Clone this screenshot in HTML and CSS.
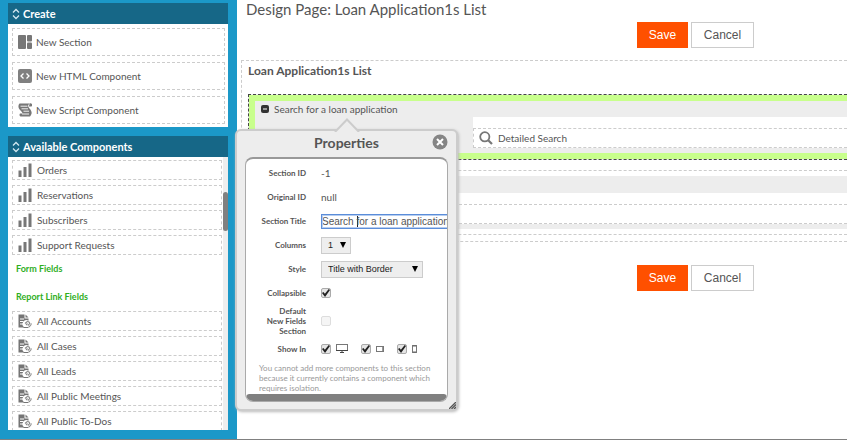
FILE: index.html
```html
<!DOCTYPE html>
<html lang="en">
<head>
<meta charset="utf-8">
<title>Design Page: Loan Application1s List</title>
<link rel="stylesheet" href="styles.css">
</head>
<body>
<svg class="sprite" aria-hidden="true">
  <symbol id="updown" viewBox="0 0 8 12"><path d="M1 4.500L4 1.500L7 4.500M1 7.500L4 10.500L7 7.500" fill="none" stroke="#d3e8f0" stroke-width="1.300"/></symbol>
  <symbol id="bars" viewBox="0 0 14 14"><path d="M0.500 7.500h3V14h-3zM5.500 4h3v10h-3zM10.500 0.500h3V14h-3z" fill="#777"/></symbol>
  <symbol id="report" viewBox="0 0 14 14"><path d="M0.500 0.500h6v4h4v2.200a3.800 3.800 0 0 0-4 6.800h-6z" fill="#757575"/><path d="M7.500 0.500l3 3h-3z" fill="#757575"/><path d="M2 5h4M2 7.500h3.500M2 10h3" stroke="#fff" stroke-width="1"/><path d="M5.500 13.500h5" stroke="#757575"/><path d="M7 9.500L9 7.800a1.700 1.700 0 0 1 2.400 2.200L9.800 11.500M12.800 9.200a1.700 1.700 0 0 1-0.500 2.400L10.800 13M9.500 9.500L8 11" fill="none" stroke="#8a8a8a" stroke-width="1.100"/></symbol>
</svg>
<div class="app">
  <aside class="sidebar">
    <section class="panel">
      <h2 class="panel-title"><svg class="updown"><use href="#updown"/></svg>Create</h2>
      <ul class="create-list">
        <li class="create-item"><svg class="icon" viewBox="0 0 14 14"><rect width="8" height="14" rx="1" fill="#777"/><rect x="9" width="5" height="6.500" rx="1" fill="#777"/><rect x="9" y="7.500" width="5" height="6.500" rx="1" fill="#777"/></svg>New Section</li>
        <li class="create-item"><svg class="icon" viewBox="0 0 14 14"><rect width="14" height="14" rx="2" fill="#808080"/><path d="M5.500 4.500L3 7l2.500 2.500M8.500 4.500L11 7L8.500 9.500" fill="none" stroke="#fff" stroke-width="1.300"/></svg>New HTML Component</li>
        <li class="create-item"><svg class="icon" viewBox="0 0 14 14"><path d="M1.500 0.500H11.500C9.500 2.200 9.800 3.600 11.500 5.400C14 8 14.500 10.800 12 13.500H3.200C1.500 13.500 1 12 2 10.500H4.500C4.500 9.500 3.500 8.500 2 7C0 5 0 2 1.500 0.500z" fill="#777"/><path d="M11.500 0.500a1.700 1.700 0 0 1 1.800 3H11z" fill="#777"/><path d="M2.500 3.200h7M3.500 5.800h6.500M5.500 8.200h5.500M4 11h7" stroke="#fff" stroke-width="0.900"/></svg>New Script Component</li>
      </ul>
    </section>
    <section class="panel panel-fill">
      <h2 class="panel-title"><svg class="updown"><use href="#updown"/></svg>Available Components</h2>
      <div class="components">
        <div class="component-groups">
          <ul class="component-list">
            <li class="component"><svg class="icon"><use href="#bars"/></svg>Orders</li>
            <li class="component"><svg class="icon"><use href="#bars"/></svg>Reservations</li>
            <li class="component"><svg class="icon"><use href="#bars"/></svg>Subscribers</li>
            <li class="component"><svg class="icon"><use href="#bars"/></svg>Support Requests</li>
          </ul>
          <h3 class="group-title">Form Fields</h3>
          <h3 class="group-title">Report Link Fields</h3>
          <ul class="component-list">
            <li class="component"><svg class="icon"><use href="#report"/></svg>All Accounts</li>
            <li class="component"><svg class="icon"><use href="#report"/></svg>All Cases</li>
            <li class="component"><svg class="icon"><use href="#report"/></svg>All Leads</li>
            <li class="component"><svg class="icon"><use href="#report"/></svg>All Public Meetings</li>
            <li class="component"><svg class="icon"><use href="#report"/></svg>All Public To-Dos</li>
          </ul>
        </div>
        <div class="track"><div class="thumb"></div></div>
      </div>
    </section>
  </aside>

  <main class="main">
    <h1 class="page-title">Design Page: Loan Application1s List</h1>
    <div class="actions"><button class="save">Save</button><button class="cancel">Cancel</button></div>
    <div class="canvas">
      <h2 class="canvas-title">Loan Application1s List</h2>
      <section class="block selected">
        <div class="block-title"><svg class="minus" viewBox="0 0 8 8"><rect width="8" height="8" rx="2" fill="#333"/><path d="M2 4h4" stroke="#fff"/></svg>Search for a loan application</div>
        <div class="block-cells">
          <div class="cell"><div class="slot"><svg class="search" viewBox="0 0 14 14"><circle cx="5.800" cy="5.800" r="4.600" fill="none" stroke="#777" stroke-width="1.800"/><path d="M9.200 9.200L13 13" stroke="#777" stroke-width="2.200"/></svg>Detailed Search</div></div>
        </div>
      </section>
      <section class="block plain">
        <div class="block-title"></div>
        <div class="cell"><div class="slot"></div></div>
      </section>
    </div>
    <div class="actions"><button class="save">Save</button><button class="cancel">Cancel</button></div>
  </main>

  <div class="popup" role="dialog" aria-labelledby="popup-title">
    <svg class="arrow" viewBox="0 0 26 14"><path d="M1 14L13 1.500L25 14" fill="#ededed" stroke="#ccc" stroke-width="2"/></svg>
    <h2 class="popup-title" id="popup-title">Properties</h2>
    <button class="close" aria-label="Close"><svg viewBox="0 0 16 16"><circle cx="8" cy="8" r="7.500" fill="#858585"/><path d="M5 5l6 6M11 5l-6 6" stroke="#fff" stroke-width="2"/></svg></button>
    <form class="sheet">
      <div class="fields">
        <span class="label">Section ID</span><span class="value">-1</span>
        <span class="label">Original ID</span><span class="value">null</span>
        <label class="label" for="title">Section Title</label><input class="text" id="title" type="text" value="Search for a loan application">
        <label class="label" for="columns">Columns</label>
        <div class="drop drop-small"><select id="columns"><option>1</option></select><svg class="caret" viewBox="0 0 6 6"><path d="M0 0h6L3 6z"/></svg></div>
        <label class="label" for="style">Style</label>
        <div class="drop"><select id="style"><option>Title with Border</option></select><svg class="caret" viewBox="0 0 6 6"><path d="M0 0h6L3 6z"/></svg></div>
        <label class="label" for="collapsible">Collapsible</label><input class="check" id="collapsible" type="checkbox" checked>
        <label class="label" for="default">Default<br>New Fields<br>Section</label><input class="check" id="default" type="checkbox" disabled>
        <span class="label">Show In</span>
        <div class="devices">
          <label class="device"><input class="check" type="checkbox" aria-label="Desktop" checked><svg class="desktop" viewBox="0 0 12 10"><rect x="0.500" y="0.500" width="11" height="6" fill="#fff" stroke="#777"/><path d="M0 6.500h12M4 8.500h4M6 7v2" stroke="#444"/></svg></label>
          <label class="device"><input class="check" type="checkbox" aria-label="Tablet" checked><svg class="tablet" viewBox="0 0 8 6"><rect x="0.500" y="0.500" width="7" height="5" fill="#fff" stroke="#777"/><path d="M6.500 1v4" stroke="#999"/></svg></label>
          <label class="device"><input class="check" type="checkbox" aria-label="Phone" checked><svg class="phone" viewBox="0 0 5 8"><rect x="0.500" y="0.500" width="4" height="7" fill="#fff" stroke="#777"/><path d="M1 1h3M1 7h3" stroke="#666"/></svg></label>
        </div>
      </div>
      <p class="note">You cannot add more components to this section because it currently contains a component which requires isolation.</p>
      <div class="hbar"></div>
    </form>
    <svg class="grip" viewBox="0 0 7 7"><path d="M0 7L7 0M2.500 7L7 2.500M5 7l2-2" stroke="#555" stroke-width="1.300"/></svg>
  </div>
</div>
</body>
</html>
```

FILE: styles.css
```css
* { box-sizing: border-box; }
body { margin: 0; font-family: Lato, sans-serif; font-size: 10px; color: #555; background: #fff; }
h1, h2, h3, ul, p { margin: 0; padding: 0; }
ul { list-style: none; }
svg { display: block; flex: none; }
button, input, select { font: inherit; color: inherit; margin: 0; padding: 0; }
.sprite { position: absolute; width: 0; height: 0; }
.app { position: relative; display: flex; height: 100vh; min-height: 440px; overflow: hidden; border-bottom: 1px solid #808080; }

.sidebar { flex: none; width: 237px; padding: 3px 9px 9px 8px; background: #1b98c8; display: flex; flex-direction: column; gap: 9px; }
.panel { background: #fff; }
.panel-fill { flex: 1; min-height: 0; display: flex; flex-direction: column; }
.panel-title { display: flex; align-items: center; gap: 3px; height: 21px; padding-left: 4px; background: #166787; color: #fff; font-size: 11px; font-weight: 700; line-height: 20px; flex: none; }
.updown { width: 8px; height: 12px; }
.create-list { display: grid; gap: 6px; padding: 4px 3px 3px 4px; }
.create-item { display: flex; align-items: center; gap: 4px; height: 28px; padding-left: 5px; border: 1px dashed #ccc; }
.icon { width: 14px; height: 14px; }
.components { flex: 1; min-height: 0; display: flex; overflow: hidden; }
.component-groups { flex: 1; padding: 3px 1px 0 4px; }
.component-list { display: grid; gap: 5px; }
.component { display: flex; align-items: center; gap: 5px; height: 20px; padding-left: 5px; border: 1px dashed #ccc; }
.group-title { height: 28px; padding: 0 4px; color: #2fae1e; font-size: 9px; line-height: 28px; font-weight: 700; }
.track { width: 5px; padding-top: 35px; background: #eee; }
.thumb { height: 39px; border-radius: 3px; background: #808080; }

.main { flex: 1; min-width: 0; padding-left: 4px; }
.page-title { padding-left: 5px; height: 22px; font-size: 15px; line-height: 18px; font-weight: 400; white-space: nowrap; }
.actions { display: flex; gap: 3px; padding-left: 396px; }
.actions button { height: 26px; font-family: "Liberation Sans", sans-serif; font-size: 12px; }
.save { width: 51px; border: 0; background: #ff5000; color: #fff; }
.cancel { width: 63px; border: 1px solid #ccc; background: #fff; }
.canvas { margin: 12px 0 23px; padding: 0 0 6px 6px; border: 1px dashed #ccc; border-right: 0; }
.canvas-title { height: 33px; font-size: 12px; line-height: 19px; font-weight: 700; }
.block { background: #ededed; border: 1px dashed #ccc; border-right: 0; }
.selected { padding: 6px 0 11px 6px; border-color: #444; box-shadow: inset 6px 6px #c8ff8c, inset 0 -6px #c8ff8c; }
.block-title { display: flex; align-items: center; gap: 5px; height: 16px; padding-left: 6px; }
.minus { width: 8px; height: 8px; }
.cell { padding-top: 11px; background: #fff; }
.block-cells { display: grid; padding-left: 218px; }
.slot { display: flex; align-items: center; gap: 5px; height: 20px; padding-left: 5px; border: 1px dashed #ccc; border-right: 0; }
.search { width: 14px; height: 14px; }
.plain { margin-top: 10px; padding: 6px 0 10px; background: linear-gradient(#fff 5px, #ededed 5px calc(100% - 5px), #fff calc(100% - 5px)); }

.popup { position: absolute; left: 235px; top: 129px; width: 223px; height: 282px; padding: 0 10px; border: 2px solid #ccc; border-radius: 6px; background: #ededed; box-shadow: 1px 1px 3px #bbb; }
.arrow { position: absolute; left: 97px; top: -13px; width: 26px; height: 14px; }
.popup-title { height: 26px; font-size: 14px; line-height: 24px; text-align: center; }
.close { position: absolute; right: 8px; top: 3px; width: 16px; height: 16px; border: 0; background: none; }
.sheet { display: flex; flex-direction: column; margin: 0 -2px; height: 245px; border: 1px solid #aaa; border-top: 2px solid #999; border-radius: 8px; background: #fff; overflow: hidden; }
.fields { display: grid; grid-template-columns: 60px 1fr; grid-template-rows: repeat(6, 24px) 32px 24px; column-gap: 15px; align-items: center; padding-top: 2px; }
.label { font-size: 8px; line-height: 10px; font-weight: 700; text-align: right; }
.text { width: 128px; height: 15px; border: 1px solid #5b8dd9; outline: 1px solid #b5cdf0; outline-offset: -2px; background: linear-gradient(#222, #222) 35px 1px / 1px 11px no-repeat #fff; font-family: "Liberation Sans", sans-serif; }
.drop { position: relative; width: 102px; height: 17px; }
.drop-small { width: 30px; }
.drop select { appearance: none; width: 100%; height: 100%; padding-left: 6px; border: 1px solid #ccc; border-radius: 0; background: #eee; color: #222; font-family: "Liberation Sans", sans-serif; font-size: 9px; }
.caret { position: absolute; right: 5px; top: 5px; width: 6px; height: 6px; pointer-events: none; }
.check { appearance: none; display: grid; place-items: center; flex: none; width: 10px; height: 10px; border: 1px solid #aaa; border-radius: 2px; background: #e5e5e5; }
.check:checked::before { content: ""; width: 8px; height: 8px; background: #222; clip-path: polygon(0 50%, 18% 36%, 36% 60%, 84% 0, 100% 14%, 38% 100%); }
.check:disabled { border-color: #ddd; background: #f5f5f5; }
.devices { display: flex; align-items: center; gap: 13px; }
.device { display: flex; align-items: center; gap: 5px; }
.desktop { width: 12px; height: 10px; }
.tablet { width: 8px; height: 6px; }
.phone { width: 5px; height: 8px; }
.note { padding: 2px 8px 0 13px; color: #999; font-size: 8px; line-height: 10px; }
.hbar { flex: none; height: 7px; margin-top: auto; border-radius: 4px; background: #808080; }
.grip { position: absolute; right: 0; bottom: 0; width: 7px; height: 7px; }
```
